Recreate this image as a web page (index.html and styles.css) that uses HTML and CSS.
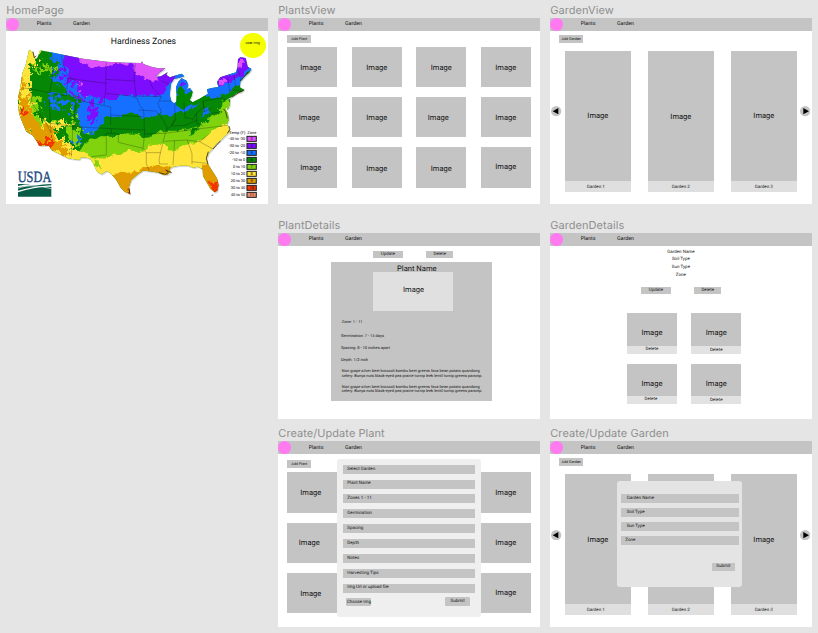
FILE: index.html
```html
<!DOCTYPE html>
<html lang="en">
<head>
<meta charset="utf-8">
<title>Garden wireframes</title>
<link rel="stylesheet" href="styles.css">
</head>
<body>
<main class="board">
  <section class="artboard home">
    <h2>HomePage</h2>
    <div class="frame">
      <nav><i class="logo"></i><span>Plants</span><span>Garden</span></nav>
      <div class="avatar">user img</div>
      <h3>Hardiness Zones</h3>
      <svg class="map" viewBox="19 147 784 464">
        <defs>
          <filter id="rough" x="-5%" y="-5%" width="110%" height="110%">
            <feTurbulence type="fractalNoise" baseFrequency="0.045" numOctaves="4" seed="4" result="n"/>
            <feDisplacementMap in="SourceGraphic" in2="n" scale="24" xChannelSelector="R" yChannelSelector="G"/>
          </filter>
          <filter id="rugged" x="-15%" y="-15%" width="130%" height="130%">
            <feTurbulence type="fractalNoise" baseFrequency="0.06" numOctaves="4" seed="9" result="n"/>
            <feDisplacementMap in="SourceGraphic" in2="n" scale="55" xChannelSelector="R" yChannelSelector="G"/>
          </filter>
          <filter id="speckle" x="0%" y="0%" width="100%" height="100%">
            <feTurbulence type="fractalNoise" baseFrequency="0.07" numOctaves="4" seed="21"/>
            <feColorMatrix values="0 0 0 0 0  0 0 0 0 0  0 0 0 0 0  16 0 0 0 -8.6" result="n"/>
            <feComposite in="SourceGraphic" in2="n" operator="in"/>
          </filter>
          <path id="usa" d="M88 150L97 154 104 170 109 177 114 171 121 151 150 156 190 164 250 176 320 185 380 188 424 189 427 184 431 192 455 200 475 205 498 205 482 216 468 231 484 229 504 217 500 225 511 232 525 227 546 221 554 229 540 233 523 237 514 251 510 285 515 303 523 310 530 305 531 285 529 262 536 245 546 235 561 242 566 255 562 268 571 264 579 275 575 290 570 300 579 307 600 296 625 281 622 268 636 264 656 261 652 245 662 232 690 223 709 217 714 200 715 178 722 172 738 174 744 200 756 207 749 218 735 230 722 245 721 262 734 269 726 276 711 280 697 291 680 299 692 298 690 315 684 330 679 317 677 327 685 341 687 360 682 373 688 383 690 395 683 402 672 412 660 424 650 432 640 445 628 458 621 475 625 492 638 513 652 535 657 555 653 572 645 577 632 566 620 545 610 528 609 508 595 500 580 503 565 497 540 497 520 500 509 507 513 515 503 524 490 525 478 518 450 514 430 512 412 525 395 540 388 560 391 582 375 575 362 562 350 540 335 522 322 513 305 523 292 515 280 490 270 475 245 472 238 480 205 475 155 450 148 437 118 437 112 425 98 405 80 395 65 360 58 340 54 300 62 260 68 220 78 195Z"/>
          <clipPath id="land"><use href="#usa"/></clipPath>
        </defs>
        <use href="#usa" class="shade" transform="translate(3 4)"/>
        <g clip-path="url(#land)">
          <rect class="z6" x="19" y="130" width="784" height="480"/>
          <g filter="url(#rough)">
            <path class="z5" d="M128 120H800V205L755 212 722 250 692 276 650 295 605 302 575 330 545 338 520 343 430 350 395 340 335 350 320 350 290 395 262 402 236 372 232 330 245 300 210 284 186 255 165 240 185 210 170 180Z"/>
            <path class="z4" d="M200 130L195 195 208 225 232 248 240 280 285 294 345 300 360 288 410 284 470 290 495 276 508 255 530 228 530 160Z"/>
            <path class="z3" d="M250 130L235 180 275 205 320 200 345 192 400 194 412 225 450 240 480 245 470 228 500 205 500 130Z"/>
            <path class="z4" d="M652 222H710L712 160H750V205L730 225 705 235 692 252 662 256Z"/>
            <path class="z3" d="M722 175l12 4-4 18-10 4zM658 240l18-4 6 10-12 8z"/>
            <path class="z6" d="M536 268L553 262 552 282 582 268 640 300 590 310 550 330 528 310Z"/>
            <path class="z5" d="M622 318l8 16-18 22 2-24z"/>
            <path class="z4" d="M545 244l14 4-2 12-12 2z"/>
            <path class="z7" d="M240 460L252 428 295 408 350 412 385 400 420 403 440 415 495 392 560 392 600 380 632 350 662 332 690 310 720 300V640H230Z"/>
            <path class="z6" d="M580 388L600 385 585 405 565 412Z"/>
            <path class="z8" d="M190 448L240 456 290 478 325 470 395 452 430 455 455 432 490 428 505 448 530 450 568 428 595 425 625 405 650 385 682 370 720 370V640H190Z"/>
            <path class="z9" d="M320 530L360 522 410 515 430 505 475 498 508 505 530 530 400 620H340ZM610 500L626 490 680 520V600H600Z"/>
            <path class="z10" d="M622 545l22 8 12-15 12 40-20 10zM386 570l10 0v16h-12z"/>
            <path class="z7" d="M282 478l14 5 6 24-14-8z"/>
          </g>
          <g filter="url(#speckle)">
            <path class="z5" d="M145 275L200 280 240 300 245 440 205 430 215 350 180 330 150 330ZM150 160L185 165 180 270 150 240Z"/>
            <path class="z4" d="M165 215L205 190 235 240 330 290 300 320 290 370 262 375 262 310 225 290 200 270Z"/>
            <path class="z7" d="M95 190L150 190 155 210 100 215ZM100 280L125 290 130 360 200 360 235 340 250 440 215 420 170 390 110 350Z"/>
            <path class="z8" d="M90 300L108 330 160 370 240 372 230 392 150 385Z"/>
          </g>
          <g filter="url(#rugged)">
            <path class="z8" d="M70 140H118L114 182 92 205 90 270 104 340 145 370 195 358 185 380 158 382 170 410 210 430 235 475 140 470 40 350Z"/>
            <path class="z9" d="M58 282L84 290 100 350 135 385 168 378 160 410 210 445 208 470 150 455 95 415 55 360Z"/>
            <path class="z9" d="M65 230l12-8-4 40-16 18z"/>
            <path class="z7" d="M116 205l55-6-10 12-48 5zM98 286l20 20-6 40 25 28-25-6-18-40zM195 375l40 10 6 32-12 20-22-30zM258 392l20 6-15 12zM210 325l12 2-8 10z"/>
            <path class="z5" d="M155 288l20 12 6 18-20 10-18-22zM238 405l10 20-14 10z"/>
            <path class="z4" d="M270 325l20 0-5 50-12 0zM200 222l26 5-5 25-15-5z"/>
            <path class="z3" d="M238 240l7 6-3 10zM240 282l7 7-7 8z"/>
            <path class="z10" d="M60 320l14 8 2 16-10 2zM92 405l22 20 22 5 10-20 12 10-4 30-45-8z"/>
            <path class="z7" d="M668 305l22-6 8 28-15 22-16-15z"/>
          </g>
          <path class="states" d="M68 264L90 266 125 273 160 280 200 288M93 267L97 310 140 370 154 398M148 284L150 330 154 398M88 195L115 201 155 208M160 208L157 240 150 277M186 166L188 190 205 228 225 240M200 288L205 235M205 235L320 250M320 186L318 270 313 315M318 238L407 243M407 190L403 235 410 290M318 280L395 288 412 295M206 285L240 302 333 321V375M230 302L220 375 215 470M155 370L220 380 335 386 435 390M333 345L430 350M412 295L420 315 432 330 435 402M410 288L485 290M415 330L468 333 480 344M335 386V400L356 402V427L430 445M335 400H320V465L275 470M435 402L430 445 440 458H483M440 458V490L448 512M435 402L495 400M480 344L502 380 494 412 483 455 478 480 480 492H505M450 245L460 265 485 290 475 310 485 335 480 344M485 243L510 252M480 303H514M525 310L527 355 515 378 502 388M553 308L557 355M557 352L580 358 590 340 612 322 610 303M495 400L555 392 635 382 688 375M495 424L560 420 600 425 625 405M525 422L520 495M563 421L577 460V492M577 485L620 490M600 425L640 447M610 303L670 293 680 305M635 340L668 335M590 340L592 370 610 378M610 305L615 335 635 325M685 235L690 275M703 224L708 260M715 210L724 240M690 270L725 272M530 355L515 378 557 376 592 360"/>
        </g>
        <path class="coast" d="M100 155l4 18 6-5M62 322l6 12M478 518l20 5 8-6-8-7 18 8M626 455l-6 20 5 18M683 355l-5-20-6-8M688 378l3 10-8 12M697 291l22-14 15-7M722 243l24-28M636 586l5-1M388 565l3 18M640 447l22-24"/>
        <g class="legend">
          <text x="737" y="403" text-anchor="end">Temp (F)</text><text x="743" y="403">Zone</text>
          <text x="737" y="421" text-anchor="end">-40 to -30</text><rect class="z3" x="742" y="409" width="28" height="15"/><text x="756" y="421" text-anchor="middle">3</text>
          <text x="737" y="442" text-anchor="end">-30 to -20</text><rect class="z4" x="742" y="430" width="28" height="15"/><text x="756" y="442" text-anchor="middle">4</text>
          <text x="737" y="463" text-anchor="end">-20 to -10</text><rect class="z5" x="742" y="451" width="28" height="15"/><text x="756" y="463" text-anchor="middle">5</text>
          <text x="737" y="484" text-anchor="end">-10 to 0</text><rect class="z6" x="742" y="472" width="28" height="15"/><text x="756" y="484" text-anchor="middle">6</text>
          <text x="737" y="505" text-anchor="end">0 to 10</text><rect class="z7" x="742" y="493" width="28" height="15"/><text x="756" y="505" text-anchor="middle">7</text>
          <text x="737" y="526" text-anchor="end">10 to 20</text><rect class="z8" x="742" y="514" width="28" height="15"/><text x="756" y="526" text-anchor="middle">8</text>
          <text x="737" y="547" text-anchor="end">20 to 30</text><rect class="z9" x="742" y="535" width="28" height="15"/><text x="756" y="547" text-anchor="middle">9</text>
          <text x="737" y="568" text-anchor="end">30 to 40</text><rect class="z10" x="742" y="556" width="28" height="15"/><text x="756" y="568" text-anchor="middle">10</text>
          <text x="737" y="589" text-anchor="end">40 to 50</text><rect class="z11" x="742" y="577" width="28" height="15"/><text x="756" y="589" text-anchor="middle">11</text>
        </g>
        <text class="usda" x="54" y="547" textLength="101" lengthAdjust="spacingAndGlyphs">USDA</text>
        <path class="field" d="M55 552Q80 551 102 554Q75 553 55 558ZM55 562Q85 556 112 556Q130 553 155 552V556Q100 559 55 572ZM55 577Q100 560 155 560V590H55Z"/>
        <path class="furrow" d="M55 565Q75 556 110 558Q130 560 155 566"/>
      </svg>
    </div>
  </section>

  <section class="artboard plants">
    <h2>PlantsView</h2>
    <div class="frame">
      <nav><i class="logo"></i><span>Plants</span><span>Garden</span></nav>
      <div class="btn add">Add Plant</div>
      <div class="cards">
        <div class="w">Image</div><div>Image</div><div>Image</div><div>Image</div>
        <div class="ww">Image</div><div>Image</div><div class="ww">Image</div><div>Image</div>
        <div class="w">Image</div><div class="s">Image</div><div class="s">Image</div><div class="n">Image</div>
      </div>
    </div>
  </section>

  <section class="artboard">
    <h2>GardenView</h2>
    <div class="frame">
      <nav><i class="logo"></i><span>Plants</span><span>Garden</span></nav>
      <div class="btn add">Add Garden</div>
      <div class="carousel">
        <svg class="arrow" viewBox="0 0 31 31"><circle cx="15.500" cy="15.500" r="15.500"/><path d="M5 15.500L22 6V25Z"/></svg>
        <figure><div>Image</div><figcaption>Garden 1</figcaption></figure>
        <figure class="low"><div>Image</div><figcaption>Garden 2</figcaption></figure>
        <figure><div>Image</div><figcaption class="mid">Garden 3</figcaption></figure>
        <svg class="arrow" viewBox="0 0 31 31"><circle cx="15.500" cy="15.500" r="15.500"/><path d="M27 15.500L10 6V25Z"/></svg>
      </div>
    </div>
  </section>

  <section class="artboard second-row details">
    <h2>PlantDetails</h2>
    <div class="frame">
      <nav><i class="logo"></i><span>Plants</span><span>Garden</span></nav>
      <div class="actions"><div class="btn">Update</div><div class="btn">Delete</div></div>
      <article>
        <h4>Plant Name</h4>
        <div class="photo">Image</div>
        <p class="fact zone">Zone: 1 - 11</p>
        <p class="fact">Germination: 7 - 14 days</p>
        <p class="fact">Spacing: 8 - 10 inches apart</p>
        <p class="fact">Depth: 1/2 inch</p>
        <p class="note">Nori grape silver beet broccoli kombu beet greens fava bean potato quandong<br>celery. Bunya nuts black-eyed pea prairie turnip leek lentil turnip greens parsnip.</p>
        <p class="note">Nori grape silver beet broccoli kombu beet greens fava bean potato quandong<br>celery. Bunya nuts black-eyed pea prairie turnip leek lentil turnip greens parsnip.</p>
      </article>
    </div>
  </section>

  <section class="artboard garden-details">
    <h2>GardenDetails</h2>
    <div class="frame">
      <nav><i class="logo"></i><span>Plants</span><span>Garden</span></nav>
      <div class="summary"><p>Garden Name</p><p>Soil Type</p><p>Sun Type</p><p>Zone</p></div>
      <div class="actions"><div class="btn">Update</div><div class="btn">Delete</div></div>
      <div class="tiles">
        <figure><div>Image</div><figcaption>Delete</figcaption></figure>
        <figure><div>Image</div><figcaption class="drop">Delete</figcaption></figure>
        <figure><div>Image</div><figcaption class="left">Delete</figcaption></figure>
        <figure><div>Image</div><figcaption class="drop">Delete</figcaption></figure>
      </div>
    </div>
  </section>

  <section class="artboard second-row plants create-plant">
    <h2>Create/Update Plant</h2>
    <div class="frame">
      <nav><i class="logo"></i><span>Plants</span><span>Garden</span></nav>
      <div class="btn add">Add Plant</div>
      <div class="cards">
        <div class="w">Image</div><div></div><div></div><div>Image</div>
        <div class="ww">Image</div><div></div><div></div><div>Image</div>
        <div class="w">Image</div><div></div><div></div><div class="n">Image</div>
      </div>
      <form class="modal">
        <div class="field-row">Select Garden</div>
        <div class="field-row">Plant Name</div>
        <div class="field-row">Zones 1 - 11</div>
        <div class="field-row">Germination</div>
        <div class="field-row">Spacing</div>
        <div class="field-row">Depth</div>
        <div class="field-row">Notes</div>
        <div class="field-row">Harvesting Tips</div>
        <div class="field-row">Img Url or upload file</div>
        <div class="foot"><div class="btn">Choose Img</div><div class="btn">Submit</div></div>
      </form>
    </div>
  </section>

  <section class="artboard create-garden">
    <h2>Create/Update Garden</h2>
    <div class="frame">
      <nav><i class="logo"></i><span>Plants</span><span>Garden</span></nav>
      <div class="btn add">Add Garden</div>
      <div class="carousel">
        <svg class="arrow" viewBox="0 0 31 31"><circle cx="15.500" cy="15.500" r="15.500"/><path d="M5 15.500L22 6V25Z"/></svg>
        <figure><div>Image</div><figcaption>Garden 1</figcaption></figure>
        <figure><div></div><figcaption class="mid">Garden 2</figcaption></figure>
        <figure><div>Image</div><figcaption class="mid">Garden 3</figcaption></figure>
        <svg class="arrow" viewBox="0 0 31 31"><circle cx="15.500" cy="15.500" r="15.500"/><path d="M27 15.500L10 6V25Z"/></svg>
      </div>
      <form class="modal">
        <div class="field-row">Garden Name</div>
        <div class="field-row">Soil Type</div>
        <div class="field-row">Sun Type</div>
        <div class="field-row last">Zone</div>
        <div class="foot"><div class="btn">Submit</div></div>
      </form>
    </div>
  </section>
</main>
</body>
</html>
```
FILE: styles.css
```css
* { box-sizing: border-box; margin: 0; padding: 0; }
body {
  background: #e5e5e5;
  color: #111;
  font: 4.500px/1 Roboto, sans-serif;
  text-rendering: geometricPrecision;
  overflow: hidden;
}
.board {
  display: grid;
  grid-template-columns: repeat(3, 261.300px);
  grid-template-rows: 215px 208.400px 209px;
  column-gap: 10.700px;
  padding-left: 6.300px;
  width: 818px;
  height: 633px;
}
.second-row { grid-column-start: 2; }
.artboard h2 {
  height: 18px;
  padding-top: 3px;
  color: #8f8f8f;
  font: 400 11px/14px Inter, sans-serif;
  letter-spacing: 0.060px;
  white-space: nowrap;
}
.frame {
  position: relative;
  height: 185.700px;
  background: #fff;
  overflow: hidden;
}
nav {
  display: flex;
  align-items: center;
  height: 12.700px;
  background: #c4c4c4;
  font-size: 5.300px;
}
nav span { width: 36.300px; padding-top: 1.200px; }
.logo { width: 13px; height: 12.700px; margin-right: 17.400px; border-radius: 50%; background: #ff7af0; }
.btn {
  display: flex;
  align-items: center;
  justify-content: center;
  padding-top: 1.300px;
  background: #c4c4c4;
  white-space: nowrap;
}
.add { width: 24px; height: 7.700px; margin: 4.300px 0 0 9px; font-size: 3.700px; }

/* Home */
.home h3 { height: 18.300px; padding: 6px 0 0 13px; text-align: center; font: 400 8.700px/10px Roboto, sans-serif; }
.avatar {
  position: absolute;
  right: 2px;
  top: 14.700px;
  width: 26px;
  height: 25.300px;
  padding-top: 9.800px;
  border-radius: 50%;
  background: #f6ff00;
  text-align: center;
  font-size: 3.700px;
}
.map { display: block; width: 261.300px; height: 154.700px; }
.z3 { fill: #e152fa; } .z4 { fill: #7d0cff; } .z5 { fill: #176fff; }
.z6 { fill: #068806; } .z7 { fill: #80d30c; } .z8 { fill: #ffe43a; }
.z9 { fill: #e09c00; } .z10 { fill: #f43600; } .z11 { fill: #ed8c69; }
.shade { fill: #d9d9d9; }
.states { fill: none; stroke: #111; stroke-opacity: .45; stroke-width: 1.800; }
.coast { fill: none; stroke: #3b2c10; stroke-width: 2.500; }
.legend { font: 12px Roboto, sans-serif; }
.legend rect { stroke: #1c1c1c; stroke-width: 3; }
.usda { fill: #1b4a82; stroke: #1b4a82; stroke-width: 1.200; font: 47px "Liberation Serif", serif; }
.field { fill: #075b46; }
.furrow { fill: none; stroke: #fff; stroke-width: 2; }

/* Plant grid */
.cards {
  display: grid;
  grid-template-columns: repeat(4, 50px);
  grid-auto-rows: 40.200px;
  gap: 10px 14.500px;
  padding: 4.300px 0 0 9px;
  font-size: 7.500px;
}
.cards div { display: flex; align-items: center; justify-content: center; padding-top: 1px; background: #c4c4c4; }
.cards .w { padding-right: 3px; }
.cards .ww { padding-right: 6px; }
.cards .s { padding-top: 2px; }
.cards .n { padding-bottom: 2px; }

/* Garden carousel */
.carousel { display: flex; align-items: center; padding: 8.300px 0 0 1.200px; }
.arrow { width: 10.300px; height: 10.300px; margin: 0 2.800px 20px 0; }
.arrow:last-child { margin: 0 0 20px 2.500px; }
.arrow circle { fill: #c4c4c4; }
.carousel figure { width: 66.500px; margin-right: 16.500px; }
.carousel figure:nth-last-child(2) { margin-right: 0; }
.carousel figure div {
  display: flex;
  align-items: center;
  justify-content: center;
  height: 130px;
  background: #c4c4c4;
  font-size: 7.500px;
}
.carousel .low div { padding-top: 1.500px; }
.carousel figcaption { height: 11px; padding: 0.700px 4px 0 0; background: #dfdfdf; text-align: center; line-height: 11px; }
.carousel .low figcaption, .carousel .mid { padding-right: 0; }

/* Detail pages */
.actions { display: flex; gap: 23.300px; }
.actions .btn { width: 30px; height: 7px; }
.actions .btn + .btn { width: 27px; }
.details .actions { padding: 5.300px 0 0 94.700px; }
article { width: 161.300px; height: 139px; margin: 4px 0 0 52.400px; background: #c4c4c4; }
article h4 { height: 10px; padding: 1.700px 0 0 11px; text-align: center; font: 400 7.600px/9px Roboto, sans-serif; }
.photo { width: 80px; height: 39px; margin-left: 42.300px; padding-top: 14px; padding-left: 1px; background: #e0e0e0; text-align: center; font-size: 7.500px; }
.fact { height: 12px; padding-left: 10.300px; font-size: 4px; line-height: 6px; }
.zone { height: 13.300px; margin-top: 8.300px; padding-left: 11.200px; }
.note { padding: 0.500px 0 0 11.200px; margin-bottom: 6px; font-size: 4px; line-height: 4.600px; white-space: nowrap; }
.summary { padding-top: 4.500px; text-align: center; line-height: 6.400px; }
.summary p { height: 7.200px; }
.summary p:last-child { padding-top: 1px; }
.garden-details .actions { padding: 7.800px 0 0 90.700px; }
.tiles { display: grid; grid-template-columns: 50px 50px; gap: 10px 14.300px; padding: 19.500px 0 0 76.700px; }
.tiles figure div { display: flex; align-items: center; justify-content: center; height: 32.500px; padding-top: 7.500px; background: #c4c4c4; font-size: 7.500px; }
.tiles figcaption { height: 7.800px; background: #e2e2e2; text-align: center; line-height: 8.200px; }
.tiles .drop { line-height: 9.400px; }
.tiles .left { padding-right: 2px; }

/* Dialogs */
.modal { position: absolute; border-radius: 3px; }
.field-row { display: flex; align-items: center; height: 9px; padding-top: 1.200px; background: #c4c4c4; }
.foot { display: flex; }
.foot .btn { border-radius: 1px; }
.create-plant .add { margin-top: 6px; }
.create-plant .cards { padding-top: 4.700px; }
.create-plant .modal { left: 58.700px; top: 17.200px; width: 144px; height: 158px; padding: 6.200px 6.200px 0 6px; background: #efefef; }
.create-plant .field-row { margin-bottom: 5.850px; padding-left: 4.300px; }
.create-plant .foot { justify-content: space-between; padding: 0 4.700px 0 3.500px; margin-top: -1px; }
.create-plant .foot .btn { width: 25px; height: 8.300px; }
.create-plant .foot .btn:first-child { margin: 0.800px 0 -0.800px; }
.create-garden .modal { left: 66.700px; top: 40px; width: 125.300px; height: 105.700px; padding: 13px 3.700px 0 4px; background: #e4e4e4; }
.create-garden .field-row { margin-bottom: 5px; padding-left: 5.700px; }
.create-garden .field-row.last { padding-left: 4.300px; }
.create-garden .foot { justify-content: flex-end; padding: 12.300px 3.700px 0 0; }
.create-garden .foot .btn { width: 23px; height: 8.300px; border-radius: 0; }
```
